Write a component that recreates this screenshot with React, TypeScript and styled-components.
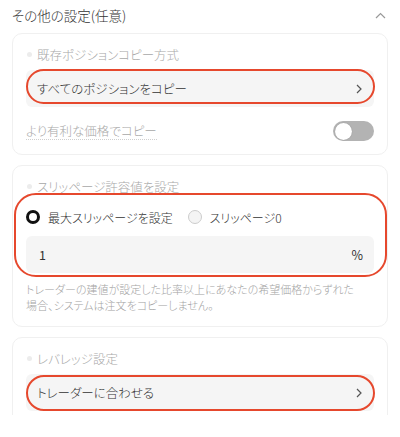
import styled, { createGlobalStyle } from "styled-components";

const GlobalStyle = createGlobalStyle`
  body {
    margin: 0;
    background: #ffffff;
    font-family: "Noto Sans CJK JP", "Noto Sans", sans-serif;
    font-feature-settings: "palt";
    font-weight: 300;
    color: #333333;
  }
`;

const Page = styled.div`
  width: 400px;
  height: 415px;
  overflow: hidden;
  padding: 0 12px;
  box-sizing: border-box;
`;

const Header = styled.div`
  height: 33px;
  display: flex;
  align-items: center;
  justify-content: space-between;
  padding-bottom: 3px;
  box-sizing: border-box;
  font-size: 13.5px;
  color: #333333;
`;

const Chevron = styled.svg`
  margin-right: 2px;
`;

const Stack = styled.div`
  display: flex;
  flex-direction: column;
  gap: 10px;
`;

const Card = styled.div`
  border: 1px solid #f0f0f0;
  border-radius: 10px;
  padding: 11px 13px 13px;
  display: flex;
  flex-direction: column;
`;

const Label = styled.div`
  display: flex;
  align-items: center;
  gap: 5px;
  height: 18px;
  font-size: 12.5px;
  color: #a8a8a8;
  margin-bottom: 7px;

  &::before {
    content: "";
    width: 5px;
    height: 5px;
    border-radius: 50%;
    background: #ececec;
    margin-left: 1px;
  }
`;

const Highlight = styled.div<{ $top: number; $side: number; $bottom: number; $radius: number }>`
  position: relative;
  display: flex;
  flex-direction: column;

  &::after {
    content: "";
    position: absolute;
    top: ${(p) => p.$top}px;
    left: ${(p) => -p.$side}px;
    right: ${(p) => -p.$side - 1}px;
    bottom: ${(p) => p.$bottom}px;
    border: 2.5px solid #e6482d;
    border-radius: ${(p) => p.$radius}px;
    pointer-events: none;
  }
`;

const Select = styled.div`
  height: 37px;
  background: #f5f5f5;
  border-radius: 6px;
  display: flex;
  align-items: center;
  justify-content: space-between;
  padding: 0 12px 0 11px;
  font-size: 12.5px;
  color: #333333;
`;

const ToggleRow = styled.div`
  display: flex;
  align-items: center;
  justify-content: space-between;
  margin-top: 14px;
  height: 20px;
`;

const Dotted = styled.span`
  font-size: 12.5px;
  color: #a8a8a8;
  border-bottom: 1px dotted #cfcfcf;
  line-height: 17px;
`;

const Toggle = styled.div`
  width: 41px;
  height: 20px;
  border-radius: 10px;
  background: #b3b3b3;
  display: flex;
  align-items: center;
  padding: 0 2px;
  box-sizing: border-box;

  &::before {
    content: "";
    width: 17px;
    height: 17px;
    border-radius: 50%;
    background: #ffffff;
    box-shadow: 0 0 1px rgba(0, 0, 0, 0.3);
  }
`;

const RadioRow = styled.div`
  display: flex;
  align-items: center;
  gap: 15px;
  height: 20px;
  margin-top: 5px;
  margin-bottom: 9px;
`;

const RadioItem = styled.label`
  display: flex;
  align-items: center;
  gap: 8px;
  font-size: 12px;
  color: #333333;
`;

const RadioDot = styled.span<{ $checked?: boolean }>`
  width: 14px;
  height: 14px;
  border-radius: 50%;
  box-sizing: border-box;
  background: ${(p) => (p.$checked ? "#ffffff" : "#f4f4f4")};
  border: ${(p) => (p.$checked ? "3.5px solid #111111" : "1px solid #cccccc")};
`;

const InputBox = styled.div`
  height: 37px;
  background: #f5f5f5;
  border-radius: 6px;
  display: flex;
  align-items: center;
  justify-content: space-between;
  padding: 0 11px 0 13px;
  font-size: 12.5px;
  font-weight: 400;
  color: #333333;
`;

const Help = styled.p`
  margin: 9px 0 0;
  font-size: 11px;
  line-height: 15.5px;
  color: #a3a3a3;
`;

const Arrow = () => (
  <svg width="6" height="10" viewBox="0 0 6 10">
    <path d="M1 1l4 4-4 4" fill="none" stroke="#555" strokeWidth="1.2" />
  </svg>
);

export default function App() {
  return (
    <>
      <GlobalStyle />
      <Page>
        <Header>
          <span>その他の設定(任意)</span>
          <Chevron width="11" height="7" viewBox="0 0 11 7">
            <path d="M1 6l4.5-4.5L10 6" fill="none" stroke="#999" strokeWidth="1.2" />
          </Chevron>
        </Header>
        <Stack>
          <Card>
            <Label>既存ポジションコピー方式</Label>
            <Highlight $top={-1} $side={0} $bottom={3} $radius={18}>
              <Select>
                <span>すべてのポジションをコピー</span>
                <Arrow />
              </Select>
            </Highlight>
            <ToggleRow>
              <Dotted>より有利な価格でコピー</Dotted>
              <Toggle />
            </ToggleRow>
          </Card>
          <Card>
            <Label>スリッページ許容値を設定</Label>
            <Highlight $top={-9} $side={12} $bottom={-4} $radius={22}>
              <RadioRow>
                <RadioItem>
                  <RadioDot $checked />
                  最大スリッページを設定
                </RadioItem>
                <RadioItem>
                  <RadioDot />
                  スリッページ0
                </RadioItem>
              </RadioRow>
              <InputBox>
                <span>1</span>
                <span>%</span>
              </InputBox>
            </Highlight>
            <Help>
              トレーダーの建値が設定した比率以上にあなたの希望価格からずれた
              <br />
              場合、システムは注文をコピーしません。
            </Help>
          </Card>
          <Card>
            <Label>レバレッジ設定</Label>
            <Highlight $top={1} $side={0} $bottom={0} $radius={18}>
              <Select>
                <span>トレーダーに合わせる</span>
                <Arrow />
              </Select>
            </Highlight>
          </Card>
        </Stack>
      </Page>
    </>
  );
}
